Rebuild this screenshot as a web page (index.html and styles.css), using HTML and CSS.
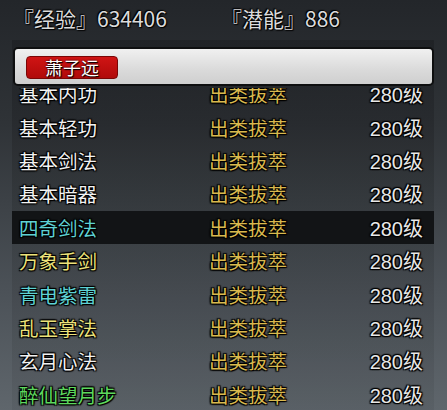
FILE: index.html
```html
<!DOCTYPE html>
<html>
<head>
	<meta charset="utf-8">
	<link rel="stylesheet" href="styles.css">
</head>
<body>
	<div class="stats">
		<span class="stat">『经验』634406</span>
		<span class="stat">『潜能』886</span>
	</div>
	<div class="panel">
		<div class="namebar">
			<span class="name-tag">萧子远</span>
		</div>
		<div class="list">
			<div class="rows">
				<div class="row"><span class="skill white">基本内功</span><span class="rank">出类拔萃</span><span class="level">280级</span></div>
				<div class="row"><span class="skill white">基本轻功</span><span class="rank">出类拔萃</span><span class="level">280级</span></div>
				<div class="row"><span class="skill white">基本剑法</span><span class="rank">出类拔萃</span><span class="level">280级</span></div>
				<div class="row"><span class="skill white">基本暗器</span><span class="rank">出类拔萃</span><span class="level">280级</span></div>
				<div class="row selected"><span class="skill cyan">四奇剑法</span><span class="rank">出类拔萃</span><span class="level">280级</span></div>
				<div class="row"><span class="skill yellow">万象手剑</span><span class="rank">出类拔萃</span><span class="level">280级</span></div>
				<div class="row"><span class="skill cyan">青电紫雷</span><span class="rank">出类拔萃</span><span class="level">280级</span></div>
				<div class="row"><span class="skill yellow">乱玉掌法</span><span class="rank">出类拔萃</span><span class="level">280级</span></div>
				<div class="row"><span class="skill white">玄月心法</span><span class="rank">出类拔萃</span><span class="level">280级</span></div>
				<div class="row"><span class="skill green">醉仙望月步</span><span class="rank">出类拔萃</span><span class="level">280级</span></div>
			</div>
		</div>
	</div>
</body>
</html>
```

FILE: styles.css
```css
html, body {
	margin: 0;
	padding: 0;
}
body {
	width: 447px;
	height: 410px;
	overflow: hidden;
	background: linear-gradient(to bottom, #23262a 0%, #2f3337 30%, #4b5157 70%, #5f666c 100%);
	font-family: "Noto Sans CJK SC", "DejaVu Sans", sans-serif;
	color: #e6e6e6;
}

.stats {
	height: 40px;
	display: grid;
	grid-template-columns: 208px auto;
	align-items: center;
	padding-left: 13px;
	box-sizing: border-box;
}
.stat {
	font-size: 21px;
	color: #dcdcdc;
	margin-top: -4px;
	text-shadow: 0 0 2px #000, 1px 1px 1px #000, -1px -1px 1px #000;
}

.panel {
	margin: 0 13px 0 12px;
	padding-top: 7px;
	background: linear-gradient(to bottom, rgba(0,0,0,0.18), rgba(0,0,0,0.06));
}

.namebar {
	height: 39px;
	box-sizing: border-box;
	margin-left: 1px;
	border: 2px solid #0e0f10;
	border-radius: 5px;
	background: linear-gradient(to bottom, #f0f0f0, #dadada 60%, #cfcfcf);
	padding: 7px 0 0 11px;
}
.name-tag {
	display: inline-block;
	width: 92px;
	height: 23px;
	box-sizing: border-box;
	border-radius: 4px;
	background: linear-gradient(to bottom, #d01414, #b00a0a);
	border: 1px solid #7a0606;
	color: #fff;
	font-size: 18px;
	line-height: 20px;
	text-align: center;
	text-shadow: 0 0 2px #000, 1px 1px 1px #000;
}

.list {
	margin-top: 2px;
	height: 322px;
	overflow: hidden;
}
.rows {
	margin-top: -11px;
}
.row {
	height: 33.4px;
	display: grid;
	grid-template-columns: 190px 1fr auto;
	align-items: center;
	padding: 0 11px 0 7px;
	font-size: 19.5px;
	text-shadow: 0 0 2px #000, 1px 1px 1px #000, -1px -1px 1px #000, 1px -1px 1px #000, -1px 1px 1px #000;
}
.row.selected {
	background: #121416;
}

.white { color: #f2f2f2; }
.cyan { color: #5fd2d4; }
.yellow { color: #ece27a; }
.green { color: #5ed85e; }

.rank {
	color: #d9b94e;
}
.level {
	color: #e8e8e8;
	font-size: 20px;
	font-family: "Liberation Sans", "Noto Sans CJK SC", sans-serif;
}
```
